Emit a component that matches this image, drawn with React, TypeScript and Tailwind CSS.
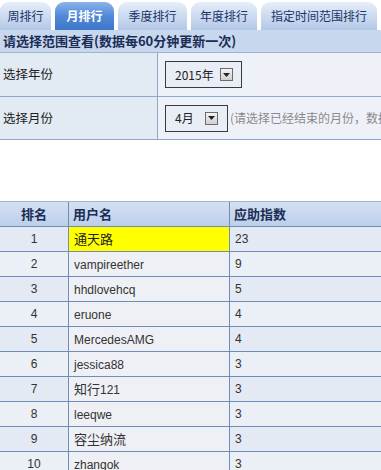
import React from "react";

const cjk = { fontFamily: '"Noto Sans CJK SC", "Liberation Sans", sans-serif' };
const latin = { fontFamily: '"Liberation Sans", "Noto Sans CJK SC", sans-serif', fontSize: "12px" };

const tabs = [
  { label: "周排行", w: "w-[51px]" },
  { label: "月排行", w: "w-[59px]", active: true },
  { label: "季度排行", w: "w-[69px]" },
  { label: "年度排行", w: "w-[66px]" },
  { label: "指定时间范围排行", w: "w-[116px]" },
];

const rows: [string, string, string][] = [
  ["1", "通天路", "23"],
  ["2", "vampireether", "9"],
  ["3", "hhdlovehcq", "5"],
  ["4", "eruone", "4"],
  ["5", "MercedesAMG", "4"],
  ["6", "jessica88", "3"],
  ["7", "知行121", "3"],
  ["8", "leeqwe", "3"],
  ["9", "容尘纳流", "3"],
  ["10", "zhangok", "3"],
];

function Mixed({ text }: { text: string }) {
  const parts = text.match(/[\u4e00-\u9fff]+|[^\u4e00-\u9fff]+/g) || [];
  return (
    <span>
      {parts.map((p, i) =>
        /[\u4e00-\u9fff]/.test(p) ? (
          <span key={i} className="text-[13px]" style={cjk}>
            {p}
          </span>
        ) : (
          <span key={i} style={latin}>
            {p}
          </span>
        )
      )}
    </span>
  );
}

function DropBtn() {
  return (
    <span className="flex h-[13px] w-[13px] items-center justify-center border border-[#6b6b6b] bg-gradient-to-b from-[#f4f4f4] to-[#cfcfcf]">
      <svg width="7" height="4" viewBox="0 0 7 4">
        <path d="M0 0 L7 0 L3.5 4 Z" fill="#222" />
      </svg>
    </span>
  );
}

export default function App() {
  return (
    <div className="w-[381px] h-[470px] overflow-hidden bg-white text-[12px]" style={cjk}>
      <div className="w-[480px]">
        {/* Tabs */}
        <div className="flex h-[30px] items-end gap-[4px] pt-[2px]">
          {tabs.map((t) => (
            <div
              key={t.label}
              className={`${t.w} flex h-[28px] shrink-0 items-center justify-center rounded-t-[9px] text-[12px] ${
                t.active
                  ? "bg-gradient-to-b from-[#8bb3ea] via-[#5189d8] to-[#3f77c9] font-bold text-white"
                  : "bg-gradient-to-b from-[#e6eef9] to-[#b3c8e7] text-[#1d3466]"
              }`}
            >
              {t.label}
            </div>
          ))}
        </div>
        {/* Header bar */}
        <div className="flex h-[23px] items-center border-b border-[#9db3d3] bg-[#c7d7ee] pl-[3px] text-[13px] font-bold text-[#1a2d55]">
          请选择范围查看(数据每60分钟更新一次)
        </div>
        {/* Row 1 */}
        <div className="flex h-[44px] border-b border-[#8ea8c9]">
          <div className="flex w-[158px] shrink-0 items-center border-r border-[#8ea8c9] bg-[#e2eaf4] pl-[3px] text-[12.5px] text-[#222]">
            选择年份
          </div>
          <div className="flex flex-1 items-center bg-[#eef2f8] pl-[7px]">
            <div className="flex h-[27px] w-[77px] shrink-0 items-center border border-[#333a4a] bg-[#e9eef6] pl-[9px] pr-[8px]">
              <span className="text-[#222]">2015年</span>
              <span className="ml-auto">
                <DropBtn />
              </span>
            </div>
          </div>
        </div>
        {/* Row 2 */}
        <div className="flex h-[43px] border-b border-[#8ea8c9]">
          <div className="flex w-[158px] shrink-0 items-center border-r border-[#8ea8c9] bg-[#e2eaf4] pl-[3px] text-[12.5px] text-[#222]">
            选择月份
          </div>
          <div className="flex min-w-0 flex-1 items-center bg-[#eef2f8] pl-[7px] whitespace-nowrap">
            <div className="flex h-[27px] w-[63px] shrink-0 items-center border border-[#333a4a] bg-[#e9eef6] pl-[9px] pr-[9px]">
              <span className="text-[#222]">4月</span>
              <span className="ml-auto">
                <DropBtn />
              </span>
            </div>
            <span className="ml-[2px] text-[#8a8a8a]">(请选择已经结束的月份，数据每60分钟更新一次)</span>
          </div>
        </div>
        {/* Spacer */}
        <div className="h-[61px]" />
        {/* Table */}
        <div className="border-t border-[#9fb5d4]">
          <div className="flex h-[25px] border-b border-[#6f8db8] bg-gradient-to-b from-[#d3e0f2] to-[#bccfea] text-[13px] font-bold text-[#1a2d55]">
            <div className="flex w-[69px] shrink-0 items-center justify-center border-r border-[#6f8db8]">排名</div>
            <div className="flex w-[161px] shrink-0 items-center border-r border-[#6f8db8] pl-[4px]">用户名</div>
            <div className="flex flex-1 items-center pl-[4px]">应助指数</div>
          </div>
          {rows.map(([rank, name, score], i) => (
            <div
              key={rank}
              className={`flex h-[25px] border-b border-[#6f8db8] text-[#333] ${
                i % 2 === 0 ? "bg-[#e3eaf4]" : "bg-[#ebeff6]"
              }`}
            >
              <div className="flex w-[69px] shrink-0 items-center justify-center border-r border-[#6f8db8]" style={latin}>
                {rank}
              </div>
              <div
                className={`flex w-[161px] shrink-0 items-center border-r border-[#6f8db8] pl-[5px] ${
                  i === 0 ? "bg-[#ffff00] text-[#222]" : "bg-[#eef0f5]"
                }`}
              >
                <Mixed text={name} />
              </div>
              <div className="flex flex-1 items-center pl-[5px]" style={latin}>
                {score}
              </div>
            </div>
          ))}
        </div>
      </div>
    </div>
  );
}
